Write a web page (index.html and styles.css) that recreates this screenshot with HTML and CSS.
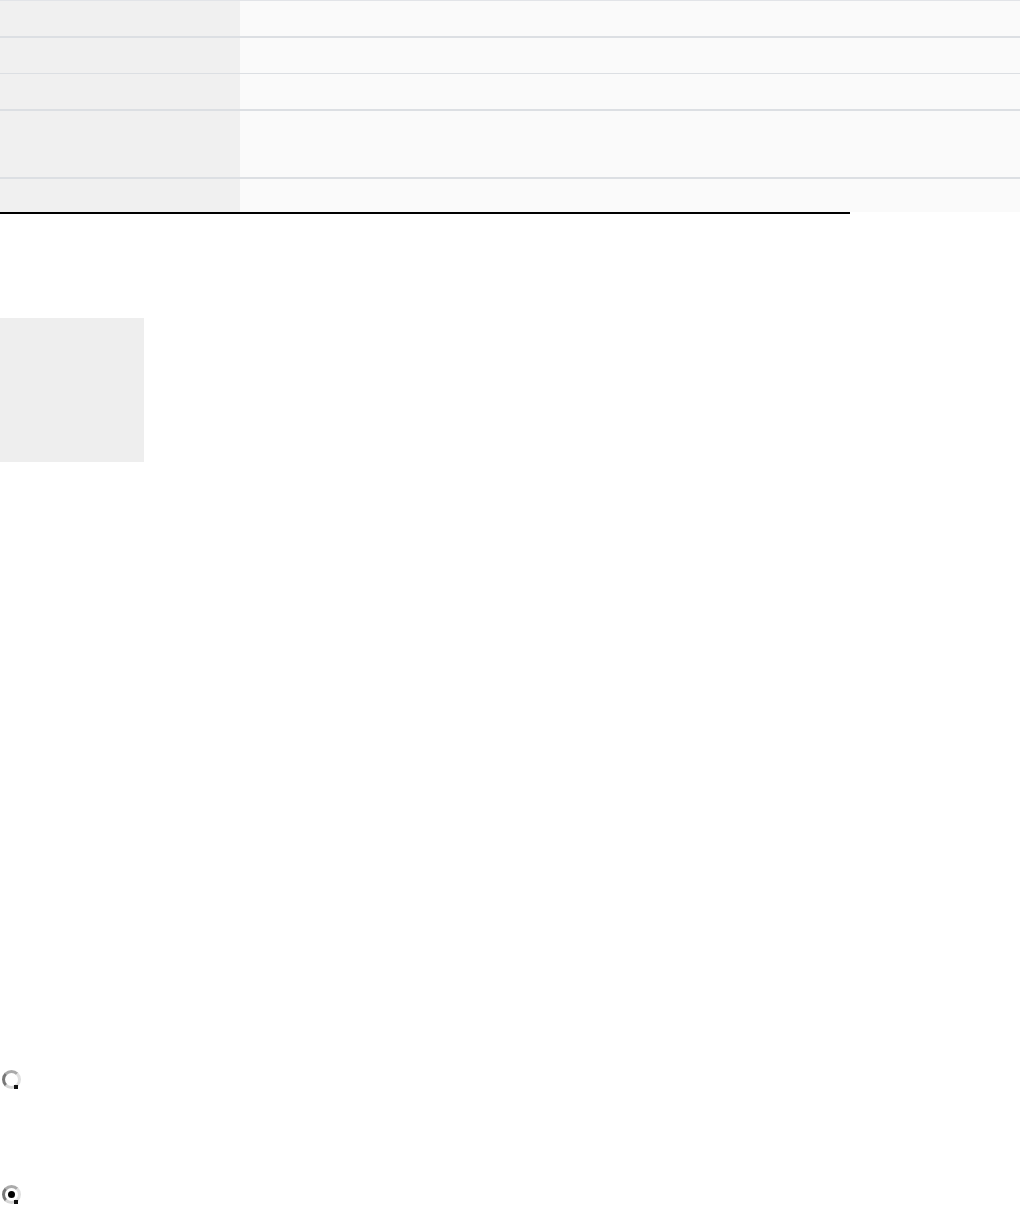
FILE: index.html
```html
<!DOCTYPE html>
<html lang="en">
<head>
<meta charset="utf-8">
<title>Page</title>
<link rel="stylesheet" href="styles.css">
</head>
<body>
<div class="table">
  <div class="row r1"><div class="key"></div><div class="val"></div></div>
  <div class="row r2"><div class="key"></div><div class="val"></div></div>
  <div class="row r3"><div class="key"></div><div class="val"></div></div>
  <div class="row r4"><div class="key"></div><div class="val"></div></div>
  <div class="row r5 last"><div class="key"></div><div class="val"></div></div>
</div>
<div class="rule"></div>
<div class="box"></div>
<div class="options">
  <label class="option first"><input type="radio" name="opt" class="radio"></label>
  <label class="option second"><input type="radio" name="opt" class="radio" checked></label>
</div>
</body>
</html>
```
FILE: styles.css
```css
html, body {
  margin: 0;
  padding: 0;
  background: #ffffff;
  font-family: "Liberation Sans", Arial, sans-serif;
}
.table {
  width: 1020px;
  border-top: 1px solid #e2e4e8;
  display: flex;
  flex-direction: column;
}
.row {
  display: flex;
  border-bottom: 1px solid #dcdfe3;
}
.row.last { border-bottom: none; }
.r1 { height: 35px; border-bottom-width: 2px; }
.r2 { height: 35px; }
.r3 { height: 35px; border-bottom-width: 2px; }
.r4 { height: 66px; border-bottom-width: 2px; }
.r5 { height: 33px; }
.key {
  width: 240px;
  background: #f0f0f0;
}
.val {
  flex: 1;
  background: #fafafa;
}
.rule {
  width: 850px;
  height: 2px;
  background: #000;
}
.box {
  margin-top: 104px;
  width: 144px;
  height: 144px;
  background: #eeeeee;
}
.options {
  display: flex;
  flex-direction: column;
}
.option {
  display: block;
  height: 20px;
  padding-left: 2px;
}
.option.first { margin-top: 608px; }
.option.second { margin-top: 95px; }
.radio {
  appearance: none;
  -webkit-appearance: none;
  margin: 0;
  width: 19px;
  height: 19px;
  box-sizing: border-box;
  border-radius: 50%;
  border: 3px solid;
  border-color: #aaaaaa #e0e0e0 #d6d6d6 #777777;
  background: #fff;
  position: relative;
}
.radio::after {
  content: "";
  position: absolute;
  right: 0px;
  bottom: -3px;
  width: 4px;
  height: 4px;
  background: #111;
}
.radio:checked::before {
  content: "";
  position: absolute;
  left: 3px;
  top: 3px;
  width: 7px;
  height: 7px;
  border-radius: 50%;
  background: #000;
}
```
